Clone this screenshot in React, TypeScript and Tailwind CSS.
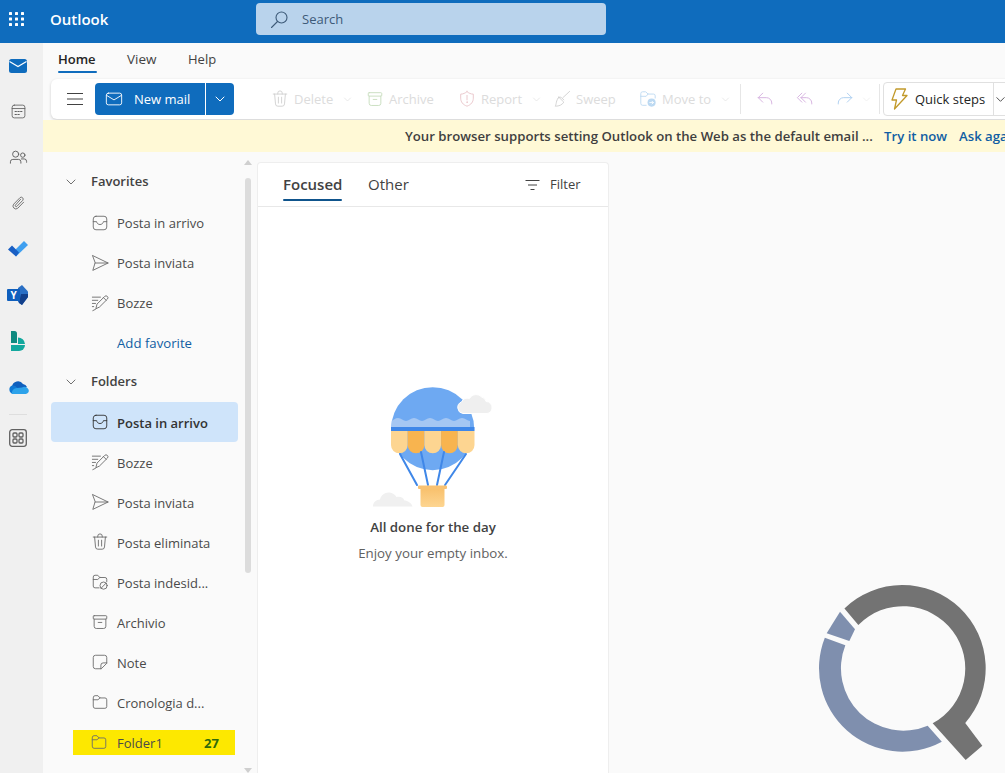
import React from "react";

const S = ({ size = 20, className = "", children, vb = "0 0 20 20" }: { size?: number; className?: string; children: React.ReactNode; vb?: string }) => (
  <svg width={size} height={size} viewBox={vb} fill="none" stroke="currentColor" strokeWidth={1} strokeLinecap="round" strokeLinejoin="round" className={`shrink-0 ${className}`}>
    {children}
  </svg>
);

const Chevron = ({ className = "", size = 12 }: { className?: string; size?: number }) => (
  <S size={size} vb="0 0 12 12" className={className}><path d="M2 4l4 4 4-4" /></S>
);

const Inbox = () => (
  <S size={18}><rect x="2.5" y="2.5" width="15" height="15" rx="3" /><path d="M2.5 8.5h3.7c.4 2 1.900 3.200 3.800 3.200s3.400-1.200 3.800-3.200h3.700" /></S>
);
const Send = () => (
  <S size={18}><path d="M2 1.800L19 10 2 18.200 4.500 10zM4.500 10H19" /></S>
);
const Draft = () => (
  <S size={18}><path d="M1.500 3.500h9M1.500 7h6M1.500 10.500h3.500M1.500 14h1.500M5.500 16l1.200-4.800 8.500-8.500a2.100 2.100 0 0 1 3 3l-8.500 8.500zM13.800 4l3 3M2 18.500l3-1.500" /></S>
);
const Trash = ({ size = 18 }: { size?: number }) => (
  <S size={size}><path d="M2.5 4.5h15M7.5 4.5V3.5a2.5 2.5 0 0 1 5 0v1M4 4.500l1 11a2.600 2.600 0 0 0 2.600 2.500h4.800a2.600 2.600 0 0 0 2.600-2.500l1-11M8.200 8v6.500M11.800 8v6.500" /></S>
);
const FolderBlock = () => (
  <S size={18}><path d="M9 16.500H4.500a2 2 0 0 1-2-2v-10a2 2 0 0 1 2-2h3l2.300 2.500h5.700a2 2 0 0 1 2 2v2.500M2.500 7.200h5L9.800 5" /><circle cx="14" cy="14" r="4" /><path d="M11.300 16.800l5.400-5.500" /></S>
);
const Archive = ({ size = 18 }: { size?: number }) => (
  <S size={size}><rect x="2.500" y="3" width="15" height="3.800" rx="1" /><path d="M3.500 6.800v8a2.400 2.400 0 0 0 2.400 2.400h8.200a2.400 2.400 0 0 0 2.400-2.400v-8M8 10.500h4" /></S>
);
const Note = () => (
  <S size={18}><path d="M11 17.500H5a2.500 2.500 0 0 1-2.500-2.500V5A2.500 2.500 0 0 1 5 2.500h10A2.500 2.500 0 0 1 17.500 5v6zM11 17.500v-4a2.500 2.500 0 0 1 2.500-2.500h4" /></S>
);
const Folder = () => (
  <S size={18}><path d="M2.500 5a2 2 0 0 1 2-2h3.200l2.300 2.500h5.500a2 2 0 0 1 2 2V15a2 2 0 0 1-2 2h-11a2 2 0 0 1-2-2zM2.500 7.500h5.200L10 5.500" /></S>
);

const Row = ({ icon, label, selected, low }: { icon: React.ReactNode; label: string; selected?: boolean; low?: boolean }) => (
  <div className={`flex h-10 items-center gap-[8px] rounded-[4px] pl-10 ${selected ? "bg-[#cfe4fa] font-semibold text-[#333333]" : "text-[#4a4a4a]"}`}>
    <span className={selected ? "text-[#333333]" : "text-[#6b6b6b]"}>{icon}</span>
    <span className={`text-[13px] ${low ? "pt-[4px]" : "pt-[2px]"}`}>{label}</span>
  </div>
);

const Header = ({ label, h }: { label: string; h: string }) => (
  <div className={`flex items-center pb-[1px] pl-[14px] text-[#424242] ${h}`}>
    <Chevron size={12} className="text-[#707070]" />
    <span className="ml-[14px] text-[13px] font-semibold">{label}</span>
  </div>
);

const Tool = ({ w, icon, label, chevron, tint }: { w: string; icon: React.ReactNode; label: string; chevron?: boolean; tint: string }) => (
  <div className={`flex items-center ${w}`}>
    <span className={tint}>{icon}</span>
    <span className="ml-[5px] pt-[2px] text-[13px] text-[#dcdcdc]">{label}</span>
    {chevron && <Chevron size={9} className="ml-[10px] text-[#e2e2e2]" />}
  </div>
);

const Waffle = () => (
  <svg width="16" height="14" viewBox="0 0 16 14" fill="#ffffff" className="shrink-0">
    {[0, 6, 12].map((x) => [0, 5.5, 11].map((y) => <rect key={`${x}-${y}`} x={x} y={y} width="3" height="3" rx="0.6" />))}
  </svg>
);

const RailIcon = ({ h = "h-[46px]", children }: { h?: string; children: React.ReactNode }) => (
  <div className={`flex w-[36px] items-center justify-center ${h}`}>{children}</div>
);

const Balloon = () => (
  <svg width="170" height="150" viewBox="0 0 170 150" className="ml-[3px] shrink-0">
    <defs>
      <clipPath id="ballon"><circle cx="82.7" cy="58.7" r="41.5" /></clipPath>
      <linearGradient id="bask" x1="0" y1="0" x2="0" y2="1"><stop offset="0" stopColor="#f8bf6a" /><stop offset="1" stopColor="#fdd591" /></linearGradient>
    </defs>
    <circle cx="82.7" cy="58.7" r="41.5" fill="#6ea9f2" />
    <g clipPath="url(#ballon)">
      <path d="M40 51c2.600 0 5-3 8-3s5.400 3 8 3 5-3 8-3 5.400 3 8 3 5-3 8-3 5.400 3 8 3 5-3 8-3 5.400 3 8 3 5-3 8-3 5.400 3 8 3v8H40z" fill="#a5c7f3" />
    </g>
    <rect x="41" y="57" width="83.5" height="4" fill="#3f87e8" />
    {[0, 1, 2, 3, 4].map((i) => (
      <path key={i} d={`M${41 + i * 16.7} 61h16.7v14a8.35 8.35 0 0 1-16.7 0z`} fill={i % 2 ? "#f8b44f" : "#fdd591"} />
    ))}
    <g stroke="#3f87e8" strokeWidth="2" strokeLinecap="round">
      <path d="M50 84l17 31M71 82l7 33M94 82l-7 33M116 84l-21 31" />
    </g>
    <rect x="70.5" y="117" width="24" height="20" rx="2" fill="url(#bask)" />
    <rect x="68" y="115.5" width="29" height="3.5" rx="1" fill="#f8c273" />
    <path d="M113 43.500a6 6 0 0 1-1.500-11.500 7 7 0 0 1 8-3.500 7.500 7.500 0 0 1 12-1.500 6 6 0 0 1 4.500 4.500 6 6 0 0 1 6 6.500 5.500 5.500 0 0 1-5 5.500z" fill="#efefef" stroke="#ffffff" strokeWidth="1" />
    <path d="M23 136.500c0-4 3-7 7-7 1-4.500 5-7.500 9.500-7 3 .3 5.500 2 7 4.500 4-1 7 1 8 3.500 3 0 7 2.500 8 6z" fill="#f0f0f0" />
  </svg>
);

const QMark = () => (
  <svg viewBox="0 0 615 639" className="absolute bottom-0 right-0 h-[213px] w-[205px]">
    <path d="M133.300 145.200A250 250 0 0 1 495.700 489L547 557 497 600 398 490A187 187 0 1 0 175 195Z" fill="#737373" />
    <path d="M74.500 233A250 250 0 0 0 425.500 545L383 497A187 187 0 0 1 136 256Z" fill="#7f8fae" />
    <path d="M120 155L165 208 148 243 80 220Z" fill="#7f8fae" />
  </svg>
);

export default function App() {
  return (
    <div className="relative flex h-screen w-screen flex-col overflow-hidden bg-[#fafafa] font-['Open_Sans','Noto_Sans',sans-serif] text-[13px]">
      {/* top bar */}
      <div className="flex h-[43px] shrink-0 items-start bg-[#0f6cbd] text-white">
        <div className="w-[43px] pl-[9px] pt-[12px]"><Waffle /></div>
        <div className="ml-[7px] mt-[8px] w-[206px] text-[15px] font-semibold">Outlook</div>
        <div className="mt-[3px] flex h-[32px] w-[350px] items-center rounded-[4px] bg-[#b9d3ec] pl-[14px] text-[#3d5a78]">
          <svg width="19" height="19" viewBox="0 0 19 19" fill="none" stroke="currentColor" strokeWidth="1.1" strokeLinecap="round"><circle cx="11.5" cy="7.5" r="5.5" /><path d="M7.500 11.500L1.500 17.500" /></svg>
          <span className="ml-[13px] pt-[1px] text-[13px]">Search</span>
        </div>
      </div>

      <div className="flex min-h-0 flex-1">
        {/* app rail */}
        <div className="flex w-[43px] shrink-0 flex-col bg-[#f0f0f0] text-[#616161]">
          <RailIcon h="h-[45px]">
            <svg width="18" height="16" viewBox="0 0 18 16"><rect x="0" y="1" width="18" height="14" rx="2.5" fill="#0f6cbd" /><path d="M0.500 3.500L9 8.500 17.500 3.500" fill="none" stroke="#ffffff" strokeWidth="1.2" /></svg>
          </RailIcon>
          <RailIcon>
            <S size={17}><rect x="2.500" y="2.500" width="15" height="15" rx="2.500" /><path d="M2.500 6.500h15" /><path d="M6 10h1.500M9.300 10h1.500M12.500 10h1.500M6 13.500h1.500M9.300 13.500h1.500" strokeWidth="1.4" /></S>
          </RailIcon>
          <RailIcon>
            <S size={19}><circle cx="7" cy="6.500" r="3.200" /><circle cx="14.500" cy="7.500" r="2.300" /><path d="M1.500 16v-1.500a2.500 2.500 0 0 1 2.500-2.500h6a2.500 2.500 0 0 1 2.500 2.500V16M13 11.500h3a2.500 2.500 0 0 1 2.500 2.500V15" /></S>
          </RailIcon>
          <RailIcon>
            <S size={17}><path d="M16 8.500l-6.800 7a3.400 3.400 0 0 1-4.800-4.800l7.500-7.700a2.300 2.300 0 0 1 3.200 3.200l-7 7.200a1.100 1.100 0 0 1-1.600-1.600L12.500 5" /></S>
          </RailIcon>
          <RailIcon>
            <svg width="20" height="16" viewBox="0 0 20 16"><path d="M8 8L16 0 20 4 8 15.500 5.500 11z" fill="#3f9ff0" /><path d="M0 8.500L4 4.500 8 8.500 11 11.500 8 15.500z" fill="#1a5fc4" /></svg>
          </RailIcon>
          <RailIcon>
            <svg width="22" height="20" viewBox="0 0 22 20">
              <path d="M11 3L15 0l6 6.500V12l-6 8-4-3z" fill="#2a6fc4" />
              <path d="M14 9h7v3l-6 8-3-2z" fill="#123f8a" />
              <rect x="0" y="4" width="13" height="12" rx="1" fill="#0f5fbd" />
              <text x="6.5" y="13.5" textAnchor="middle" fontSize="10" fontWeight="700" fill="#ffffff" fontFamily="Open Sans">Y</text>
            </svg>
          </RailIcon>
          <RailIcon>
            <svg width="14" height="20" viewBox="0 0 14 20"><path d="M0 0h3.500A2.500 2.500 0 0 1 6 2.500V12H0z" fill="#0f8a80" /><path d="M7 6.500a7 7 0 0 1 7 6.500H7z" fill="#13a89e" /><path d="M0 14h14a6 6 0 0 1-6 6H0z" fill="#13a89e" /></svg>
          </RailIcon>
          <RailIcon>
            <svg width="21" height="14" viewBox="0 0 21 14"><path d="M4 6.500a6 6 0 0 1 11-2.500 5 5 0 0 1 4 3L8 12z" fill="#0f5fbd" /><path d="M5 14a4.500 4.500 0 0 1-1-8.500 5 5 0 0 1 5 2l1 1z" fill="#0f78d4" /><path d="M4 14h13.500a3.200 3.200 0 0 0 3-4.500A4.500 4.500 0 0 0 14 7.500L9 8a5 5 0 0 0-5 6z" fill="#2ca2ea" /></svg>
          </RailIcon>
          <div className="ml-[9px] mt-[4px] h-px w-[18px] bg-[#dedede]" />
          <RailIcon>
            <svg width="18" height="18" viewBox="0 0 18 18" fill="none" stroke="#616161" strokeWidth="1.3"><rect x="0.7" y="0.7" width="16.6" height="16.6" rx="2.5" /><rect x="4" y="4" width="4" height="4" rx="1" /><rect x="10" y="4" width="4" height="4" rx="1" /><rect x="4" y="10" width="4" height="4" rx="1" /><rect x="10" y="10" width="4" height="4" rx="1" /></svg>
          </RailIcon>
        </div>

        {/* main */}
        <div className="flex min-w-0 flex-1 flex-col">
          {/* ribbon tabs */}
          <div className="flex h-[36px] shrink-0 items-center pb-[3px] pl-[15px] text-[#424242]">
            <div className="relative flex h-full w-[69px] items-center">
              <span className="font-semibold text-[#242424]">Home</span>
              <span className="absolute bottom-[3px] left-0 h-[2px] w-[39px] rounded-sm bg-[#0f6cbd]" />
            </div>
            <div className="w-[61px] text-[13.5px]">View</div>
            <div>Help</div>
          </div>
          {/* toolbar */}
          <div className="ml-[8px] flex h-[40px] w-[1000px] shrink-0 items-center rounded-[6px] bg-white shadow-[0_1px_3px_rgba(0,0,0,0.18)]">
            <svg width="16" height="14" viewBox="0 0 16 14" fill="none" stroke="#424242" strokeWidth="1" className="ml-[16px]"><path d="M0 1.500h16M0 7h16M0 12.500h16" /></svg>
            <div className="ml-[12px] flex h-[32px] w-[139px] items-center rounded-[4px] bg-[#0f6cbd] text-white">
              <S size={18} className="ml-[10px]"><rect x="1.500" y="3.500" width="17" height="13" rx="2.200" /><path d="M1.800 6L10 11l8.200-5" /></S>
              <span className="ml-[11px] w-[71px] pt-[1px] text-[13px]">New mail</span>
              <div className="h-full w-px bg-white" />
              <Chevron size={12} className="ml-[8px]" />
            </div>
            <div className="ml-[37px] flex items-center">
              <Tool w="w-[95px]" icon={<Trash size={18} />} label="Delete" chevron tint="text-[#cfcfcf]" />
              <Tool w="w-[92px]" icon={<Archive size={18} />} label="Archive" tint="text-[#c6dcbc]" />
              <Tool w="w-[95px]" icon={<S size={18}><path d="M10 1.800c2 1.800 4.300 2.700 7 2.800V9c0 4.300-2.400 7.300-7 9-4.600-1.700-7-4.700-7-9V4.600c2.700-.1 5-1 7-2.800zM10 6v5" /><circle cx="10" cy="13.500" r=".4" /></S>} label="Report" chevron tint="text-[#e9c4c8]" />
              <Tool w="w-[86px]" icon={<S size={18}><path d="M18.500 1.500L11 8.500M6.500 8l5.500 5.500c-2 3-5 4.500-9.500 4.500C4 15.500 3 12 6.500 8zM5.500 9c1-1 3-1.500 4-.5l2.500 2.500" /></S>} label="Sweep" tint="text-[#cfcfcf]" />
              <Tool w="w-[101px]" icon={<S size={18}><path d="M8 17H4a2 2 0 0 1-2-2V4a2 2 0 0 1 2-2h3.500L10 4.500h6a2 2 0 0 1 2 2V9M2 7h6l2-2.500" /><circle cx="14" cy="14" r="4.500" fill="#bcd9f2" stroke="none" /><path d="M12 14h4M14.500 12.500L16 14l-1.500 1.500" stroke="#ffffff" /></S>} label="Move to" chevron tint="text-[#bcd9f2]" />
            </div>
            <div className="h-[30px] w-px bg-[#e6e6e6]" />
            <div className="ml-[15px] flex items-center">
              <S size={18} className="text-[#d4aede]"><path d="M7.500 3.500L2.500 8.500l5 5M2.500 8.500h9a6 6 0 0 1 6 6v1" /></S>
              <S size={18} className="ml-[22px] text-[#d4aede]"><path d="M6.500 3.500L1.500 8.500l5 5M10.500 3.500l-5 5 5 5M5.500 8.500h6a6 6 0 0 1 6 6v1" /></S>
              <S size={18} className="ml-[22px] text-[#a9cdef]"><path d="M12.500 3.500l5 5-5 5M17.500 8.500h-9a6 6 0 0 0-6 6v1" /></S>
              <Chevron size={9} className="ml-[8px] text-[#ececec]" />
            </div>
            <div className="ml-[8px] h-[30px] w-px bg-[#e6e6e6]" />
            <div className="ml-[3px] flex h-[34px] flex-1 items-center rounded-[4px] border border-[#e0e0e0] pl-[7px]">
              <svg width="17" height="22" viewBox="0 0 17 22" fill="none" stroke="#c29a2b" strokeWidth="1.3" strokeLinejoin="round"><path d="M5 1h9.500l-3 6.500H16L3.500 21l2-9H1z" /></svg>
              <span className="ml-[7px] w-[78px] whitespace-nowrap pt-[2px] text-[13px] text-[#242424]">Quick steps</span>
              <div className="h-full w-px bg-[#e0e0e0]" />
              <Chevron size={11} className="ml-[1px] text-[#424242]" />
            </div>
          </div>
          {/* banner */}
          <div className="mt-px flex h-[32px] shrink-0 items-center whitespace-nowrap bg-[#fff9d6] pl-[362px] pt-[2px] text-[13.2px] font-semibold">
            <span className="w-[479px] shrink-0 text-[#3f3f3f]">Your browser supports setting Outlook on the Web as the default email ...</span>
            <span className="w-[75px] shrink-0 text-[#115ea3]">Try it now</span>
            <span className="text-[#115ea3]">Ask again later</span>
          </div>

          {/* body */}
          <div className="flex min-h-0 flex-1">
            <div className="flex w-[214px] shrink-0">
              <div className="w-[195px] shrink-0 pl-[8px] pt-[9px]">
                <Header label="Favorites" h="h-[42px]" />
                <Row icon={<Inbox />} label="Posta in arrivo" />
                <Row icon={<Send />} label="Posta inviata" />
                <Row icon={<Draft />} label="Bozze" />
                <div className="flex h-10 items-center pl-[66px] pt-[1px] text-[13.2px] text-[#115ea3]">Add favorite</div>
                <Header label="Folders" h="h-[39px]" />
                <Row low selected icon={<Inbox />} label="Posta in arrivo" />
                <Row low icon={<Draft />} label="Bozze" />
                <Row low icon={<Send />} label="Posta inviata" />
                <Row low icon={<Trash />} label="Posta eliminata" />
                <Row low icon={<FolderBlock />} label="Posta indesid..." />
                <Row low icon={<Archive />} label="Archivio" />
                <Row low icon={<Note />} label="Note" />
                <Row low icon={<Folder />} label="Cronologia d..." />
                <div className="flex h-10 items-center pl-[22px]">
                  <div className="flex h-[25px] w-[162px] items-center bg-[#fde800] pl-[17px] text-[#4a4a4a]">
                    <span className="text-[#6b6b6b]"><Folder /></span>
                    <span className="ml-[9px] w-[87px] pt-[3px] text-[13px]">Folder1</span>
                    <span className="pt-[3px] text-[13px] font-bold text-[#2f6b0a]">27</span>
                  </div>
                </div>
              </div>
              <div className="flex w-[19px] flex-col items-center pt-[8px]">
                <div className="h-0 w-0 border-x-[4px] border-b-[5px] border-x-transparent border-b-[#cfcfcf]" />
                <div className="mt-[13px] h-[395px] w-[6px] rounded-full bg-[#dcdcdc]" />
                <div className="mt-[195px] h-0 w-0 border-x-[4px] border-t-[5px] border-x-transparent border-t-[#cfcfcf]" />
              </div>
            </div>

            <div className="mt-[10px] flex w-[352px] shrink-0 flex-col rounded-t-[4px] border border-b-0 border-[#eeeeee] bg-white">
              <div className="flex h-[44px] shrink-0 items-center border-b border-[#e8e8e8] pl-[25px] text-[#424242]">
                <div className="relative flex h-full w-[85px] items-center">
                  <span className="text-[15px] font-semibold">Focused</span>
                  <span className="absolute bottom-[5px] left-0 h-[2px] w-[59px] rounded-sm bg-[#0f548c]" />
                </div>
                <span className="w-[157px] text-[15px]">Other</span>
                <svg width="15" height="12" viewBox="0 0 15 12" fill="none" stroke="#424242" strokeWidth="1"><path d="M0.500 1.500h14M3 6h9M5.500 10.500h4" /></svg>
                <span className="ml-[10px] text-[13px]">Filter</span>
              </div>
              <div className="flex flex-col items-center pt-[163px]">
                <Balloon />
                <div className="-mt-[2px] text-[13.3px] font-semibold text-[#424242]">All done for the day</div>
                <div className="mt-[6px] text-[13.3px] text-[#616161]">Enjoy your empty inbox.</div>
              </div>
            </div>
          </div>
        </div>
      </div>
      <QMark />
    </div>
  );
}
